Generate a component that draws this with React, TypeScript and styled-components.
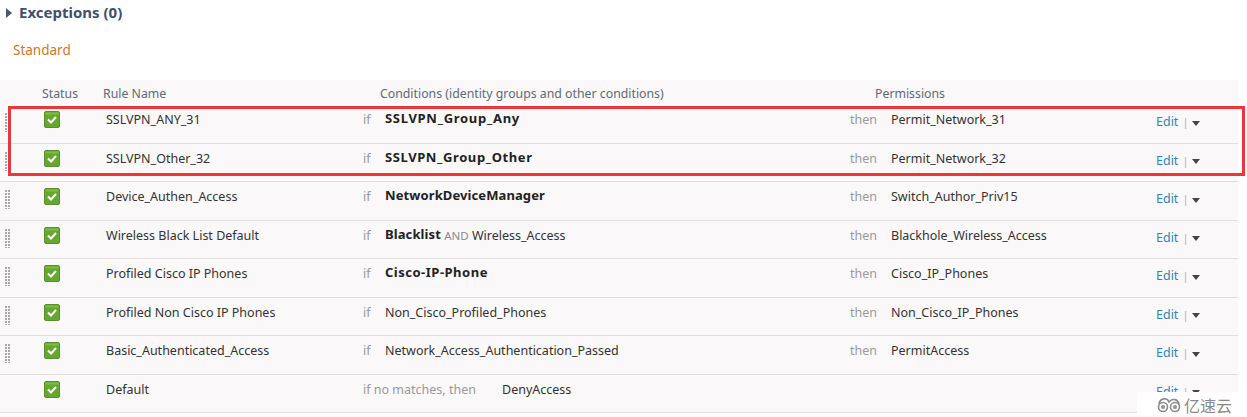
import React from 'react'
import styled, { createGlobalStyle } from 'styled-components'

const GlobalStyle = createGlobalStyle`
  html, body {
    margin: 0;
    padding: 0;
    background: #fff;
    overflow: hidden;
  }
  body {
    font-family: "Noto Sans", "Liberation Sans", sans-serif;
  }
`

const Page = styled.div`
  position: relative;
  width: 1247px;
  height: 417px;
  overflow: hidden;
`

const SectionHead = styled.div`
  display: flex;
  align-items: center;
  gap: 7px;
  height: 26px;
  padding-left: 6px;
`

const Caret = styled.span`
  width: 0;
  height: 0;
  border-top: 5px solid transparent;
  border-bottom: 5px solid transparent;
  border-left: 6px solid #4a5a70;
`

const SectionTitle = styled.span`
  font-size: 15px;
  font-weight: 700;
  color: #3f5069;
  margin-top: -3px;
`

const GroupTitle = styled.div`
  padding: 15px 0 0 13px;
  height: 39px;
  font-size: 13.5px;
  line-height: 19px;
  color: #c9772b;
`

const Table = styled.div`
  width: 1238px;
  background: #faf8f9;
`

const HeadRow = styled.div`
  display: grid;
  grid-template-columns: 61px 277px 495px 1fr;
  height: 25px;
  align-items: center;
  padding: 2px 0 0 42px;
  box-sizing: border-box;
  font-size: 12.3px;
  white-space: nowrap;
  color: #5f6a75;
`

const Row = styled.div`
  position: relative;
  display: grid;
  grid-template-columns: 62px 257px 22px 465px 41px 265px 1fr;
  height: 38.5px;
  box-sizing: border-box;
  border-bottom: 1px solid #dfdfdf;
  padding: 6px 0 0 44px;
  font-size: 12.5px;
  line-height: 18px;
  white-space: nowrap;
  color: #333;
`

const Grip = styled.span`
  position: absolute;
  left: 5px;
  top: 8px;
  width: 6px;
  height: 19px;
  background-image: radial-gradient(circle at 1px 1px, #a9a9a9 1px, transparent 1.1px);
  background-size: 3px 3px;
`

const Check = styled.svg`
  width: 16px;
  height: 17px;
  display: block;
`

const Muted = styled.span`
  color: #9a9a9a;
`

const Strong = styled.b<{ $spacing: number }>`
  font-weight: 700;
  font-size: 13px;
  line-height: 1;
  letter-spacing: ${p => p.$spacing}px;
  vertical-align: 1px;
  color: #222;
`

const Joiner = styled.span`
  color: #8a8a8a;
  font-size: 11.5px;
`

const Actions = styled.span`
  display: flex;
  align-items: center;
  height: 18px;
  padding-top: 2px;
  font-size: 12.5px;
  color: #2f86b5;
`

const Pipe = styled.span`
  margin: 0 4px;
  font-size: 11px;
  color: #aab0b5;
`

const Arrow = styled.span`
  width: 0;
  height: 0;
  margin-top: 2px;
  border-left: 4px solid transparent;
  border-right: 4px solid transparent;
  border-top: 5px solid #444;
`

const DefaultCell = styled.span`
  grid-column: 3 / span 4;
  display: grid;
  grid-template-columns: 139px 1fr;
`

const Highlight = styled.div`
  position: absolute;
  left: 8px;
  top: 106px;
  width: 1237px;
  height: 70px;
  box-sizing: border-box;
  border: 3px solid #e8383d;
  pointer-events: none;
`

const Watermark = styled.div`
  position: absolute;
  right: 0;
  bottom: 0;
  width: 110px;
  height: 25px;
  background: #fff;
  display: flex;
  align-items: center;
  gap: 2px;
  padding-left: 19px;
  box-sizing: border-box;
  color: #8a8a8a;
  font-family: "Noto Sans CJK SC", sans-serif;
  font-size: 16px;
`

const CheckIcon = () => (
  <Check viewBox="0 0 16 17">
    <rect x="0.5" y="0.5" width="15" height="16" rx="1.5" fill="#65a830" stroke="#5a8f2e" />
    <rect x="1.5" y="1.5" width="13" height="2" fill="#7dbb45" />
    <path d="M4 8.5 L7 11.5 L12 6" fill="none" stroke="#fff" strokeWidth="2" />
  </Check>
)

const Logo = () => (
  <svg width="26" height="16" viewBox="0 0 26 16" fill="none" stroke="#8a8a8a" strokeWidth="1.6">
    <circle cx="7" cy="10" r="4.5" />
    <circle cx="19" cy="10" r="4.5" />
    <path d="M3 7 C4 1 11 0 13 5 C16 1 22 2 23 7" />
    <circle cx="7" cy="10" r="1.2" />
    <circle cx="19" cy="10" r="1.2" />
  </svg>
)

type Rule = {
  name: string
  condition: React.ReactNode
  permission: string
}

const rules: Rule[] = [
  { name: 'SSLVPN_ANY_31', condition: <Strong $spacing={0.7}>SSLVPN_Group_Any</Strong>, permission: 'Permit_Network_31' },
  { name: 'SSLVPN_Other_32', condition: <Strong $spacing={0.6}>SSLVPN_Group_Other</Strong>, permission: 'Permit_Network_32' },
  { name: 'Device_Authen_Access', condition: <Strong $spacing={0.1}>NetworkDeviceManager</Strong>, permission: 'Switch_Author_Priv15' },
  {
    name: 'Wireless Black List Default',
    condition: (
      <>
        <Strong $spacing={0.1}>Blacklist</Strong> <Joiner>AND</Joiner> Wireless_Access
      </>
    ),
    permission: 'Blackhole_Wireless_Access',
  },
  { name: 'Profiled Cisco IP Phones', condition: <Strong $spacing={0.5}>Cisco-IP-Phone</Strong>, permission: 'Cisco_IP_Phones' },
  { name: 'Profiled Non Cisco IP Phones', condition: 'Non_Cisco_Profiled_Phones', permission: 'Non_Cisco_IP_Phones' },
  { name: 'Basic_Authenticated_Access', condition: 'Network_Access_Authentication_Passed', permission: 'PermitAccess' },
]

const EditActions = () => (
  <Actions>
    Edit
    <Pipe>|</Pipe>
    <Arrow />
  </Actions>
)

export default function App() {
  return (
    <Page>
      <GlobalStyle />
      <SectionHead>
        <Caret />
        <SectionTitle>Exceptions (0)</SectionTitle>
      </SectionHead>
      <GroupTitle>Standard</GroupTitle>
      <Table>
        <HeadRow>
          <span>Status</span>
          <span>Rule Name</span>
          <span>Conditions (identity groups and other conditions)</span>
          <span>Permissions</span>
        </HeadRow>
        {rules.map(rule => (
          <Row key={rule.name}>
            <Grip />
            <CheckIcon />
            <span>{rule.name}</span>
            <Muted>if</Muted>
            <span>{rule.condition}</span>
            <Muted>then</Muted>
            <span>{rule.permission}</span>
            <EditActions />
          </Row>
        ))}
        <Row>
          <CheckIcon />
          <span>Default</span>
          <DefaultCell>
            <Muted>if no matches, then</Muted>
            <span>DenyAccess</span>
          </DefaultCell>
          <EditActions />
        </Row>
      </Table>
      <Highlight />
      <Watermark>
        <Logo />
        亿速云
      </Watermark>
    </Page>
  )
}
